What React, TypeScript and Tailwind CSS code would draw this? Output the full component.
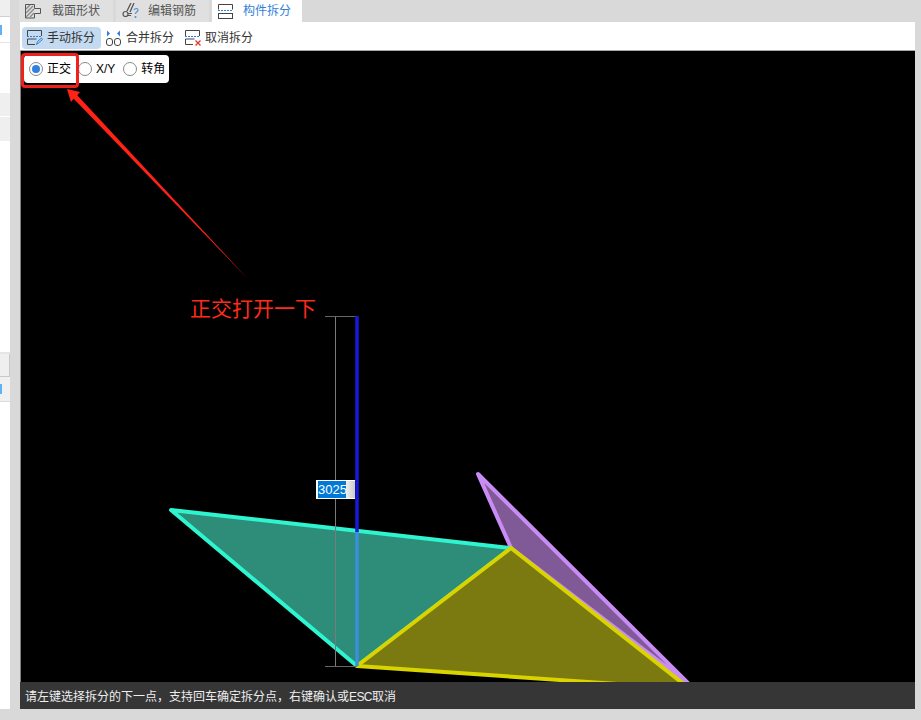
const TabShapeIcon = () => (
  <svg width="16" height="15" viewBox="0 0 16 15" fill="none">
    <path d="M0.5 0.5h9v4h6v5h-6v4.5h-9z" stroke="#555" />
    <path d="M1 5l4-4M1 9l7-7M1 13l8-8M5 13l4-4" stroke="#888" strokeWidth="1.4" />
  </svg>
);

const TabRebarIcon = () => (
  <svg width="17" height="16" viewBox="0 0 17 16" fill="none">
    <path d="M9 0L5 8M12 0L8 9" stroke="#555" strokeWidth="1.3" />
    <circle cx="3.5" cy="11" r="2.5" stroke="#555" strokeWidth="1.2" />
    <path d="M6 10.5h4M6 12.5h3" stroke="#555" />
    <path d="M12 7c1-2 4-2 4 0s-2.5 1.5-2.5 4" stroke="#4a90d9" strokeWidth="1.2" />
    <circle cx="13.5" cy="14" r="1" fill="#4a90d9" />
  </svg>
);

const SplitIcon = () => (
  <svg width="15" height="15" viewBox="0 0 15 15" fill="none">
    <path d="M0.5 5.5V0.5h14v5" stroke="#444" />
    <path d="M0 6.5h15" stroke="#2f80d8" strokeDasharray="2 1" />
    <rect x="0.5" y="9.5" width="14" height="5" stroke="#444" />
  </svg>
);

const ManualIcon = () => (
  <svg width="16" height="16" viewBox="0 0 16 16" fill="none">
    <path d="M0.5 6V0.5h14V6" stroke="#444" />
    <path d="M0 6.5h15" stroke="#2f80d8" strokeDasharray="2 1" />
    <path d="M8 14.5H0.5V9h9" stroke="#444" />
    <path d="M9.5 14.5l1-3 4-3.5 1 1.5-4 3.5z" stroke="#2f80d8" />
  </svg>
);

const MergeIcon = () => (
  <svg width="15" height="16" viewBox="0 0 15 16" fill="none">
    <rect x="0.5" y="8.5" width="6" height="7" rx="2.5" stroke="#444" />
    <rect x="8.5" y="8.5" width="6" height="7" rx="2.5" stroke="#444" />
    <path d="M1 0.5l3 3-3 3z" fill="#2f80d8" />
    <path d="M14 0.5l-3 3 3 3z" fill="#2f80d8" />
  </svg>
);

const CancelIcon = () => (
  <svg width="16" height="16" viewBox="0 0 16 16" fill="none">
    <path d="M0.5 6V0.5h14V6" stroke="#444" />
    <path d="M0 6.5h15" stroke="#2f80d8" strokeDasharray="2 1" />
    <path d="M8 14.5H0.5V9h9" stroke="#444" />
    <path d="M10.5 10.5l5 5M15.5 10.5l-5 5" stroke="#e23a2e" strokeWidth="1.4" />
  </svg>
);

const Radio = ({ label, checked }: { label: string; checked?: boolean }) => (
  <div className="flex items-center gap-1">
    <span className="flex h-[14px] w-[14px] items-center justify-center rounded-full border border-[#8a8a8a] bg-white">
      {checked && <span className="h-2 w-2 rounded-full bg-[#2f80e0]" />}
    </span>
    <span>{label}</span>
  </div>
);

const App = () => {
  return (
    <div className="flex h-[720px] w-[921px] overflow-hidden bg-[#d9d9d9] font-['Liberation_Sans','Noto_Sans_CJK_SC',sans-serif] text-xs">
      {/* left panel, cut off by the crop */}
      <div className="flex h-[709px] w-[10px] flex-col bg-white">
        <div className="h-[17px] border-b border-[#d0d0d0] bg-[#efefef]" />
        <div className="flex h-[26px] items-center border-b border-[#e4e4e4]">
          <div className="h-[10px] w-[2px] bg-[#62b0f5]" />
        </div>
        <div className="h-[50px]" />
        <div className="h-[23px] bg-[#efefef]" />
        <div className="h-px" />
        <div className="h-6 bg-[#efefef]" />
        <div className="h-[211px]" />
        <div className="h-[2px] bg-[#e6e6e6]" />
        <div className="h-[23px] border-r border-b border-[#c8c8c8] bg-[#efefef]" />
        <div className="flex h-[25px] items-center border-b border-[#dcdcdc] bg-[#f0f0f0]">
          <div className="h-[10px] w-[2px] bg-[#62b0f5]" />
        </div>
      </div>

      <div className="ml-[10px] flex h-[709px] w-[895px] flex-col">
        {/* tabs */}
        <div className="flex h-[22px] gap-[3px] text-[#555]">
          <div className="-ml-px flex w-[94px] items-center bg-[#e0e0e0] pl-[6px]">
            <TabShapeIcon />
            <span className="ml-[11px]">截面形状</span>
          </div>
          <div className="flex w-[93px] items-center bg-[#e0e0e0] pl-[6px]">
            <TabRebarIcon />
            <span className="ml-[9px]">编辑钢筋</span>
          </div>
          <div className="flex w-[90px] items-center bg-white pl-[6px] text-[#2f80d8]">
            <SplitIcon />
            <span className="ml-[10px]">构件拆分</span>
          </div>
        </div>

        {/* toolbar */}
        <div className="flex h-[29px] items-center border-b border-[#a8a8a8] bg-white pt-[3px] pl-[2px] text-[#333]">
          <div className="flex h-[22px] w-[79px] items-center gap-[4px] rounded-sm bg-[#c3daf0] pl-[5px]">
            <ManualIcon />
            <span>手动拆分</span>
          </div>
          <div className="ml-[5px] flex items-center gap-[5px]">
            <MergeIcon />
            <span>合并拆分</span>
          </div>
          <div className="ml-[11px] flex items-center gap-[4px]">
            <CancelIcon />
            <span>取消拆分</span>
          </div>
        </div>

        {/* drawing canvas */}
        <div className="relative flex-1 overflow-hidden border-l border-[#808080] bg-black">
          <svg className="absolute inset-0" width="894" height="631" viewBox="21 51 894 631" fill="none" strokeLinejoin="round">
            <polygon points="478,474 511,548 690,685" fill="#7f5a96" stroke="#c98cf5" strokeWidth="4" />
            <polygon points="171,510 511,548 357,666" fill="#2d8d78" stroke="#2ef5d0" strokeWidth="4" />
            <polygon points="511,548 357,666 690,689" fill="#7a7a10" stroke="#d9d400" strokeWidth="4" />
            <path d="M335.5 316v350" stroke="#7a7a7a" />
            <path d="M325 316.5h32M325 666.5h32" stroke="#666" />
            <path d="M357 316v216" stroke="#1818d8" strokeWidth="3.5" />
            <path d="M357 532v134" stroke="#3a90dc" strokeWidth="3.5" />
            <path d="M67 89L80 92L77.3 95.3L248 279L73.7 98.7L71 102Z" fill="#ff2216" />
          </svg>

          {/* mode switch */}
          <div className="absolute top-[4px] left-[3px] flex h-[28px] w-[145px] items-center gap-[7px] rounded-sm bg-white pl-[5px] text-black">
            <Radio label="正交" checked />
            <Radio label="X/Y" />
            <div className="ml-px">
              <Radio label="转角" />
            </div>
          </div>
          <div className="absolute top-[2px] left-0 h-[35px] w-[58px] rounded-[4px] border-[3px] border-[#f0201a]" />

          <div className="absolute top-[247px] left-[169px] text-[21px] leading-[22px] whitespace-nowrap text-[#ff2a1a]">
            正交打开一下
          </div>

          {/* length input */}
          <div className="absolute top-[429px] left-[295px] flex h-[19px] w-[39px] bg-white py-px pl-[2px]">
            <div className="w-[28px] bg-[#0078d7] text-center text-[13px] leading-[17px] text-white">3025</div>
            <div className="flex-1 bg-gradient-to-r from-[#eeeeee] to-[#cccccc]" />
          </div>
        </div>

        {/* hint bar */}
        <div className="flex h-[27px] items-center bg-[#363636] pt-[3px] pl-[5px] text-[#eeeeee]">
          请左键选择拆分的下一点，支持回车确定拆分点，右键确认或<span className="tracking-[-0.6px]">ESC</span>取消
        </div>
      </div>
    </div>
  );
};

export default App;
